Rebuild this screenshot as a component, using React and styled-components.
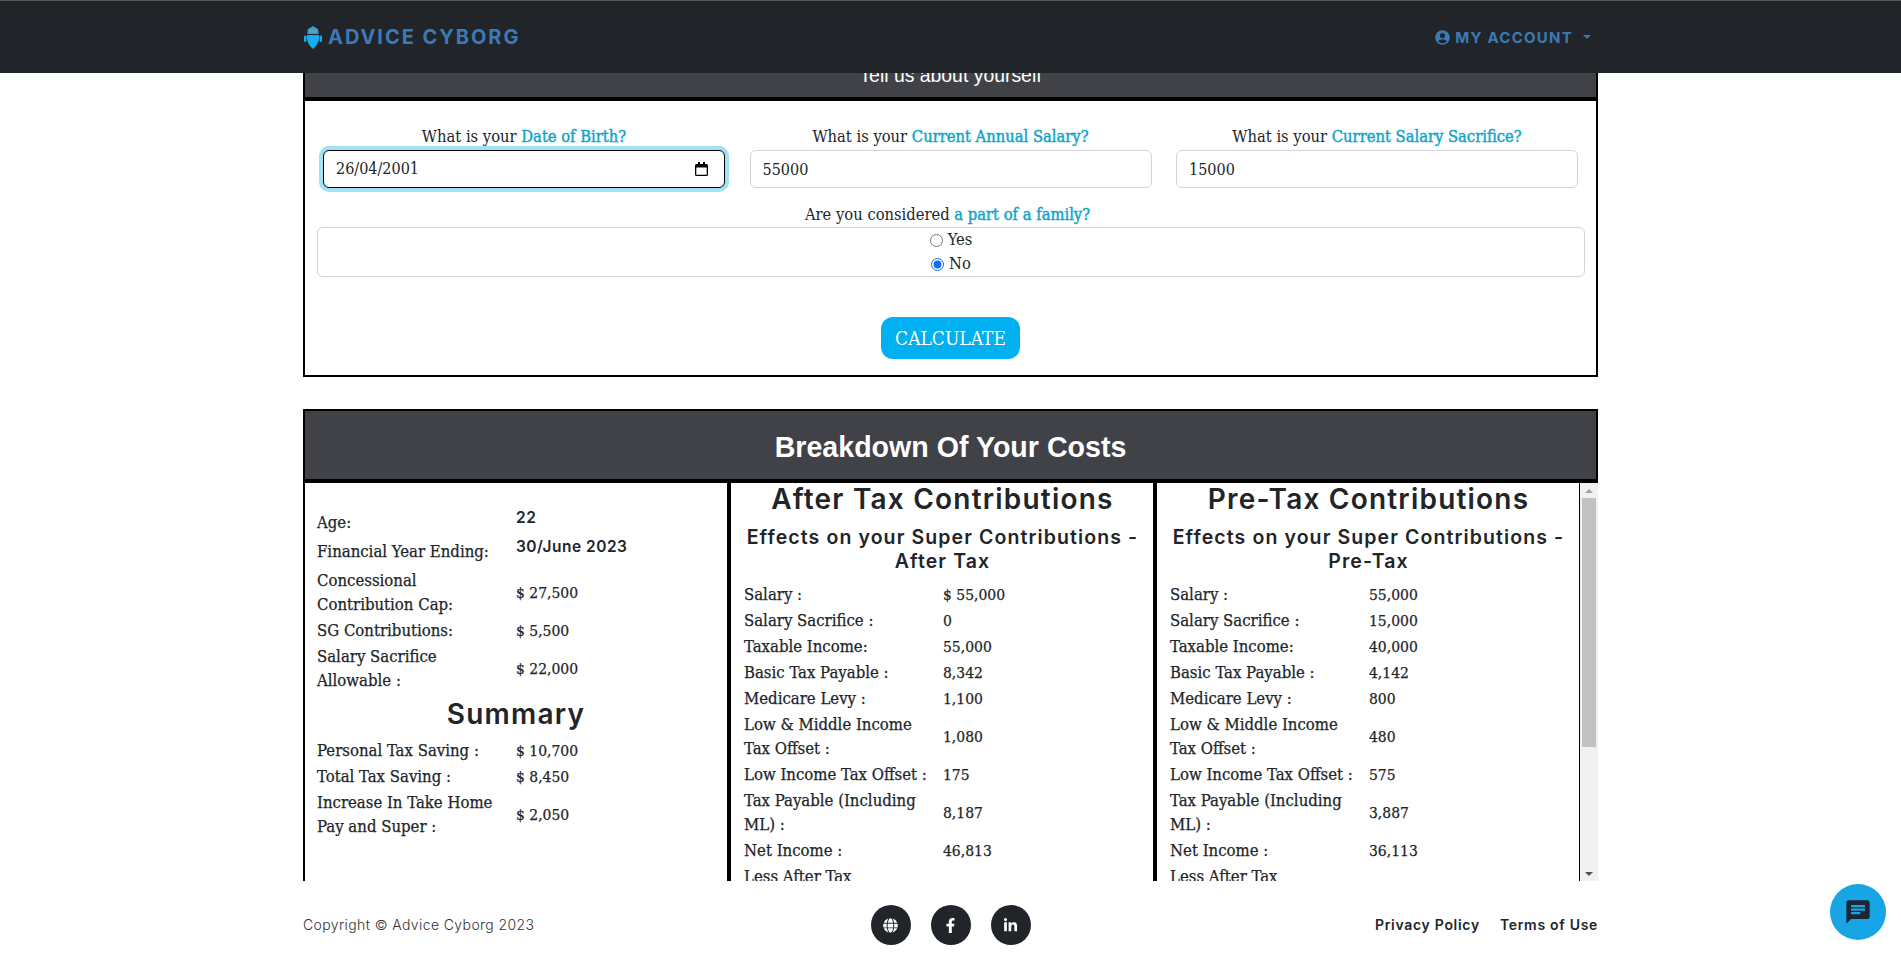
import React from "react";
import styled, { createGlobalStyle } from "styled-components";
import { FaGlobe, FaFacebookF, FaLinkedinIn, FaUserCircle } from "react-icons/fa";
import { MdChat } from "react-icons/md";

const SLAB = `"DejaVu Serif Condensed", "Liberation Serif", serif`;
const HEAD = `"Inter", "Noto Sans", sans-serif`;

const Global = createGlobalStyle`
  html, body { margin: 0; padding: 0; height: 100%; overflow: hidden; background: #fff; }
  * { box-sizing: border-box; }
  body { font-family: ${SLAB}; font-size: 16.4px; line-height: 24px; color: #212529; }
`;

const Page = styled.div`
  height: 100vh;
  display: flex;
  flex-direction: column;
`;

const Navbar = styled.header`
  flex: 0 0 73px;
  background: #212529;
  border-top: 1px solid #55585b;
  padding: 0 303px 0 304px;
  display: flex;
  align-items: center;
  justify-content: space-between;
  position: relative;
  z-index: 2;
`;

const Brand = styled.a`
  display: flex;
  align-items: center;
  gap: 6px;
  font: 700 20px/1 ${HEAD};
  letter-spacing: 1.95px;
  color: #3d7ab5;
`;

const Account = styled.a`
  display: flex;
  align-items: center;
  gap: 5px;
  padding-right: 7px;
  font: 700 15px/1 ${HEAD};
  letter-spacing: 1.25px;
  color: #3d7ab5;
`;

const Caret = styled.span`
  width: 0;
  height: 0;
  margin-left: 5px;
  border-top: 4px solid #3d7ab5;
  border-left: 4px solid transparent;
  border-right: 4px solid transparent;
`;

const Main = styled.main`
  flex: 1;
  min-height: 0;
  overflow: hidden;
  padding: 0 303px;
`;

const Card = styled.section`
  border: 2px solid #000;
  border-top-width: ${(p) => (p.$clipped ? 0 : 2)}px;
  margin-top: ${(p) => (p.$clipped ? -16 : 32)}px;
`;

const FormHeader = styled.div`
  height: 44px;
  padding-top: 6px;
  background: #414247;
  border-bottom: 4px solid #000;
  color: #fff;
  text-align: center;
  font: 400 19.4px/24px "Liberation Sans", Arial, sans-serif;
`;

const FormBody = styled.form`
  padding: 24px 18px 16px 12px;
  display: flex;
  flex-direction: column;
  align-items: stretch;
`;

const FieldRow = styled.div`
  display: grid;
  grid-template-columns: repeat(3, 402px);
  gap: 24.5px;
  padding-left: 6px;
`;

const Field = styled.div`
  display: flex;
  flex-direction: column;
  text-align: center;
`;

const Question = styled.label`
  display: block;
  height: 25px;
  text-align: center;
  white-space: nowrap;
`;

const Accent = styled.b`
  font-weight: 400;
  -webkit-text-stroke: 0.45px #0ea5c9;
  color: #0ea5c9;
`;

const inputBox = `
  height: 38px;
  border-radius: 6px;
  background: #fff;
  color: #212529;
  font-family: ${SLAB};
  font-size: 16px;
`;

const NumberInput = styled.input`
  ${inputBox}
  width: 100%;
  padding: 0 12px;
  border: 1px solid #ced4da;
  outline: none;
`;

const DateBox = styled.div`
  ${inputBox}
  display: flex;
  align-items: center;
  justify-content: space-between;
  padding: 0 16px 0 12px;
  border: 1.5px solid #000;
  box-shadow: 0 0 0 4px #a3e1f4;
`;

const DateText = styled.span`
  line-height: 1;
`;

const FamilyQuestion = styled(Question)`
  margin-top: 15px;
  height: 24px;
`;

const RadioBox = styled.div`
  width: 1268px;
  height: 50px;
  border: 1px solid #ced4da;
  border-radius: 6px;
  display: flex;
  flex-direction: column;
  align-items: center;
`;

const RadioLabel = styled.label`
  display: flex;
  align-items: center;
  gap: 5px;
  height: 24px;
`;

const Radio = styled.input`
  margin: 0;
  width: 13px;
  height: 13px;
  accent-color: #0d6efd;
`;

const Submit = styled.button`
  align-self: center;
  margin: 40px 0 0 6px;
  width: 139px;
  height: 42px;
  border: 0;
  border-radius: 12px;
  background: #00b0f0;
  color: #fff;
  font-family: ${SLAB};
  font-size: 19px;
`;

const BreakdownHeader = styled.h2`
  margin: 0;
  height: 72px;
  background: #414247;
  border-bottom: 4px solid #000;
  color: #fff;
  font: 700 28.6px/73px "Liberation Sans", Arial, sans-serif;
  text-align: center;
`;

const CostCard = styled(Card)`
  border-bottom: 0;
`;

const Body = styled.div`
  height: 398px;
  display: flex;
  margin-right: -2px;
`;

const Columns = styled.div`
  flex: 1;
  min-width: 0;
  overflow: hidden;
  display: grid;
  grid-template-columns: 426px 426px 424px;
  align-items: start;
`;

const ScrollTrack = styled.div`
  flex: 0 0 18px;
  background: #f1f1f1;
  display: flex;
  flex-direction: column;
  align-items: center;
`;

const ScrollArrow = styled.span`
  flex: 0 0 15px;
  display: flex;
  align-items: center;
  justify-content: center;
  &::before {
    content: "";
    border-left: 4px solid transparent;
    border-right: 4px solid transparent;
    ${(p) => (p.$down ? "border-top: 4px solid #505050;" : "border-bottom: 4px solid #a3a3a3;")}
  }
`;

const ScrollThumb = styled.span`
  flex: 0 0 249px;
  width: 14px;
  background: #c1c1c1;
`;

const ScrollRest = styled.span`
  flex: 1;
`;

const Column = styled.div`
  height: 398px;
  padding: 0 12px 0 13px;
  border-right: ${(p) => (p.$thin ? 2 : 4)}px solid #000;
`;

const SideColumn = styled(Column)`
  padding: 27px 12px 0 12px;
`;

const ColumnTitle = styled.h3`
  margin: 0 0 10px;
  font: 600 28px/32px ${HEAD};
  letter-spacing: 1.2px;
  text-align: center;
  color: #212529;
`;

const ColumnSubtitle = styled.h4`
  margin: 0 0 9px;
  font: 600 19.500px/24px ${HEAD};
  letter-spacing: 1.100px;
  text-align: center;
  color: #212529;
`;

const SummaryTitle = styled.h3`
  margin: 4px 0 8px;
  font: 600 28px/32px ${HEAD};
  letter-spacing: 1.2px;
  text-align: center;
`;

const Row = styled.div`
  display: grid;
  grid-template-columns: 199px 1fr;
  align-items: center;
  padding: 1px 0;
  -webkit-text-stroke: 0.25px #212529;
`;

const RowLabel = styled.span`
  white-space: pre;
  font-size: 16.6px;
`;

const RowValue = styled.span`
  font-size: 15.5px;
`;

const HeadRow = styled(Row)`
  padding-bottom: 4px;
`;

const HeadValue = styled.span`
  font: 600 15.500px/24px ${HEAD};
  letter-spacing: 0.5px;
  -webkit-text-stroke: 0;
  position: relative;
  top: -5px;
`;

const Footer = styled.footer`
  flex: 0 0 75px;
  padding: 13px 303px 0;
  display: grid;
  grid-template-columns: 1fr auto 1fr;
  align-items: center;
  font-family: ${HEAD};
  font-size: 14px;
`;

const Copyright = styled.span`
  font-weight: 300;
  letter-spacing: 0.4px;
  color: #333;
`;

const Socials = styled.div`
  display: flex;
  gap: 20px;
`;

const Social = styled.a`
  width: 40px;
  height: 40px;
  border-radius: 50%;
  background: #212529;
  color: #fff;
  display: flex;
  align-items: center;
  justify-content: center;
  font-size: 15px;
`;

const Legal = styled.nav`
  display: flex;
  justify-content: flex-end;
  gap: 20px;
  font-weight: 600;
  letter-spacing: 0.7px;
`;

const ChatBubble = styled.button`
  position: fixed;
  right: 15px;
  bottom: 16px;
  width: 56px;
  height: 56px;
  padding: 0;
  border: 0;
  border-radius: 50%;
  background: #17a5e6;
  color: #1c2733;
  display: flex;
  align-items: center;
  justify-content: center;
  font-size: 28px;
`;

const summaryTop = [
  ["Concessional\nContribution Cap:", "$ 27,500"],
  ["SG Contributions:", "$ 5,500"],
  ["Salary Sacrifice\nAllowable :", "$ 22,000"],
];

const summaryBottom = [
  ["Personal Tax Saving :", "$ 10,700"],
  ["Total Tax Saving :", "$ 8,450"],
  ["Increase In Take Home\nPay and Super :", "$ 2,050"],
];

const afterTax = [
  ["Salary :", "$ 55,000"],
  ["Salary Sacrifice :", "0"],
  ["Taxable Income:", "55,000"],
  ["Basic Tax Payable :", "8,342"],
  ["Medicare Levy :", "1,100"],
  ["Low & Middle Income\nTax Offset :", "1,080"],
  ["Low Income Tax Offset :", "175"],
  ["Tax Payable (Including\nML) :", "8,187"],
  ["Net Income :", "46,813"],
  ["Less After Tax", ""],
];

const preTax = [
  ["Salary :", "55,000"],
  ["Salary Sacrifice :", "15,000"],
  ["Taxable Income:", "40,000"],
  ["Basic Tax Payable :", "4,142"],
  ["Medicare Levy :", "800"],
  ["Low & Middle Income\nTax Offset :", "480"],
  ["Low Income Tax Offset :", "575"],
  ["Tax Payable (Including\nML) :", "3,887"],
  ["Net Income :", "36,113"],
  ["Less After Tax", ""],
];

function Rows({ items }) {
  return items.map(([label, value]) => (
    <Row key={label}>
      <RowLabel>{label}</RowLabel>
      <RowValue>{value}</RowValue>
    </Row>
  ));
}

function RobotLogo() {
  return (
    <svg width="18" height="23" viewBox="0 0 18 23">
      <path d="M9 0v2" stroke="#1fa8e8" strokeWidth="1.5" />
      <path d="M3.500 8V5a5.500 4 0 0 1 11 0v3z" fill="#1fa8e8" />
      <rect x="4.500" y="3.500" width="9" height="3" rx="1.500" fill="#7d93a8" />
      <path d="M3 9h12c1 4-1.500 10.500-6 14C4.500 19.500 2 13 3 9z" fill="#12b0f2" />
      <rect x="0" y="9.500" width="2.400" height="6.500" rx="1.200" fill="#12b0f2" />
      <rect x="15.600" y="9.500" width="2.400" height="6.500" rx="1.200" fill="#12b0f2" />
    </svg>
  );
}

function CalendarIcon() {
  return (
    <svg width="13" height="14" viewBox="0 0 13 14">
      <path d="M3 0h2v2h3V0h2v2h1.500A1.500 1.500 0 0 1 13 3.500v9a1.500 1.500 0 0 1-1.500 1.500h-10A1.500 1.500 0 0 1 0 12.500v-9A1.500 1.500 0 0 1 1.500 2H3zM1.300 5.500v7.200h10.400V5.500z" fill="#000" />
    </svg>
  );
}

export default function App() {
  return (
    <Page>
      <Global />
      <Navbar>
        <Brand><RobotLogo />ADVICE CYBORG</Brand>
        <Account><FaUserCircle size={15} />MY ACCOUNT<Caret /></Account>
      </Navbar>

      <Main>
        <Card $clipped>
          <FormHeader>Tell us about yourself</FormHeader>
          <FormBody>
            <FieldRow>
              <Field>
                <Question>What is your <Accent>Date of Birth?</Accent></Question>
                <DateBox><DateText>26/04/2001</DateText><CalendarIcon /></DateBox>
              </Field>
              <Field>
                <Question>What is your <Accent>Current Annual Salary?</Accent></Question>
                <NumberInput defaultValue="55000" />
              </Field>
              <Field>
                <Question>What is your <Accent>Current Salary Sacrifice?</Accent></Question>
                <NumberInput defaultValue="15000" />
              </Field>
            </FieldRow>
            <FamilyQuestion>Are you considered <Accent>a part of a family?</Accent></FamilyQuestion>
            <RadioBox>
              <RadioLabel><Radio type="radio" name="family" />Yes</RadioLabel>
              <RadioLabel><Radio type="radio" name="family" defaultChecked />No</RadioLabel>
            </RadioBox>
            <Submit type="button">CALCULATE</Submit>
          </FormBody>
        </Card>

        <CostCard>
          <BreakdownHeader>Breakdown Of Your Costs</BreakdownHeader>
          <Body>
            <Columns>
              <SideColumn>
                <HeadRow><RowLabel>Age:</RowLabel><HeadValue>22</HeadValue></HeadRow>
                <HeadRow><RowLabel>Financial Year Ending:</RowLabel><HeadValue>30/June 2023</HeadValue></HeadRow>
                <Rows items={summaryTop} />
                <SummaryTitle>Summary</SummaryTitle>
                <Rows items={summaryBottom} />
              </SideColumn>
              <Column>
                <ColumnTitle>After Tax Contributions</ColumnTitle>
                <ColumnSubtitle>Effects on your Super Contributions - After Tax</ColumnSubtitle>
                <Rows items={afterTax} />
              </Column>
              <Column $thin>
                <ColumnTitle>Pre-Tax Contributions</ColumnTitle>
                <ColumnSubtitle>Effects on your Super Contributions - Pre-Tax</ColumnSubtitle>
                <Rows items={preTax} />
              </Column>
            </Columns>
            <ScrollTrack>
              <ScrollArrow />
              <ScrollThumb />
              <ScrollRest />
              <ScrollArrow $down />
            </ScrollTrack>
          </Body>
        </CostCard>
      </Main>

      <Footer>
        <Copyright>Copyright © Advice Cyborg 2023</Copyright>
        <Socials>
          <Social><FaGlobe /></Social>
          <Social><FaFacebookF /></Social>
          <Social><FaLinkedinIn /></Social>
        </Socials>
        <Legal><span>Privacy Policy</span><span>Terms of Use</span></Legal>
      </Footer>

      <ChatBubble aria-label="Chat"><MdChat /></ChatBubble>
    </Page>
  );
}
